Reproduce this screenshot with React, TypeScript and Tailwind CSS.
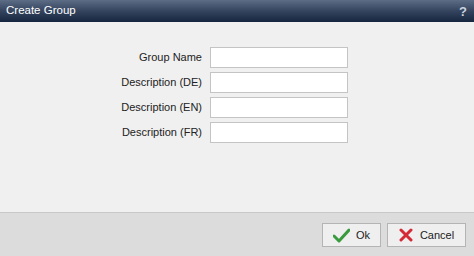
export default function App() {
  const fields = ["Group Name", "Description (DE)", "Description (EN)", "Description (FR)"];
  return (
    <div className="w-[474px] h-[256px] flex flex-col bg-[#f0f0f0] font-['Liberation_Sans',Arial,sans-serif] text-[11px] text-[#222]">
      {/* Header */}
      <div className="h-[22px] flex items-center justify-between pl-[6px] pr-[7px] bg-gradient-to-b from-[#5d6d86] via-[#34445e] to-[#17263f] text-white">
        <span className="text-[11.5px] leading-none">Create Group</span>
        <span className="text-[13px] font-bold text-[#c9d2de] leading-none">?</span>
      </div>

      {/* Form */}
      <div className="flex-1 pt-[25px]">
        <div className="flex flex-col gap-[4px]">
          {fields.map((f) => (
            <div key={f} className="flex items-center h-[21px]">
              <label className="w-[210px] shrink-0 text-right pr-[8px] text-[11px] text-[#222]">{f}</label>
              <input
                type="text"
                className="w-[138px] h-[21px] bg-white border border-[#c4c4c4] outline-none"
              />
            </div>
          ))}
        </div>
      </div>

      {/* Footer */}
      <div className="h-[44px] flex items-center justify-end gap-[6px] pr-[8px] pt-[1px] bg-[#dcdcdc] border-t border-[#c8c8c8]">
        <button className="w-[59px] h-[24px] flex items-center justify-center gap-[6px] bg-[#efefef] border border-[#b4b4b4] text-[11px] text-[#222]">
          <svg width="17" height="15" viewBox="0 0 17 15">
            <path d="M1 8 L6 13 L16 2" fill="none" stroke="#3a9a3e" strokeWidth="3" strokeLinecap="round" strokeLinejoin="round" />
          </svg>
          <span>Ok</span>
        </button>
        <button className="w-[79px] h-[24px] flex items-center justify-center gap-[7px] bg-[#efefef] border border-[#b4b4b4] text-[11px] text-[#222]">
          <svg width="14" height="14" viewBox="0 0 14 14">
            <path d="M2 2 L12 12 M12 2 L2 12" fill="none" stroke="#d42a36" strokeWidth="3" strokeLinecap="round" />
          </svg>
          <span>Cancel</span>
        </button>
      </div>
    </div>
  );
}
